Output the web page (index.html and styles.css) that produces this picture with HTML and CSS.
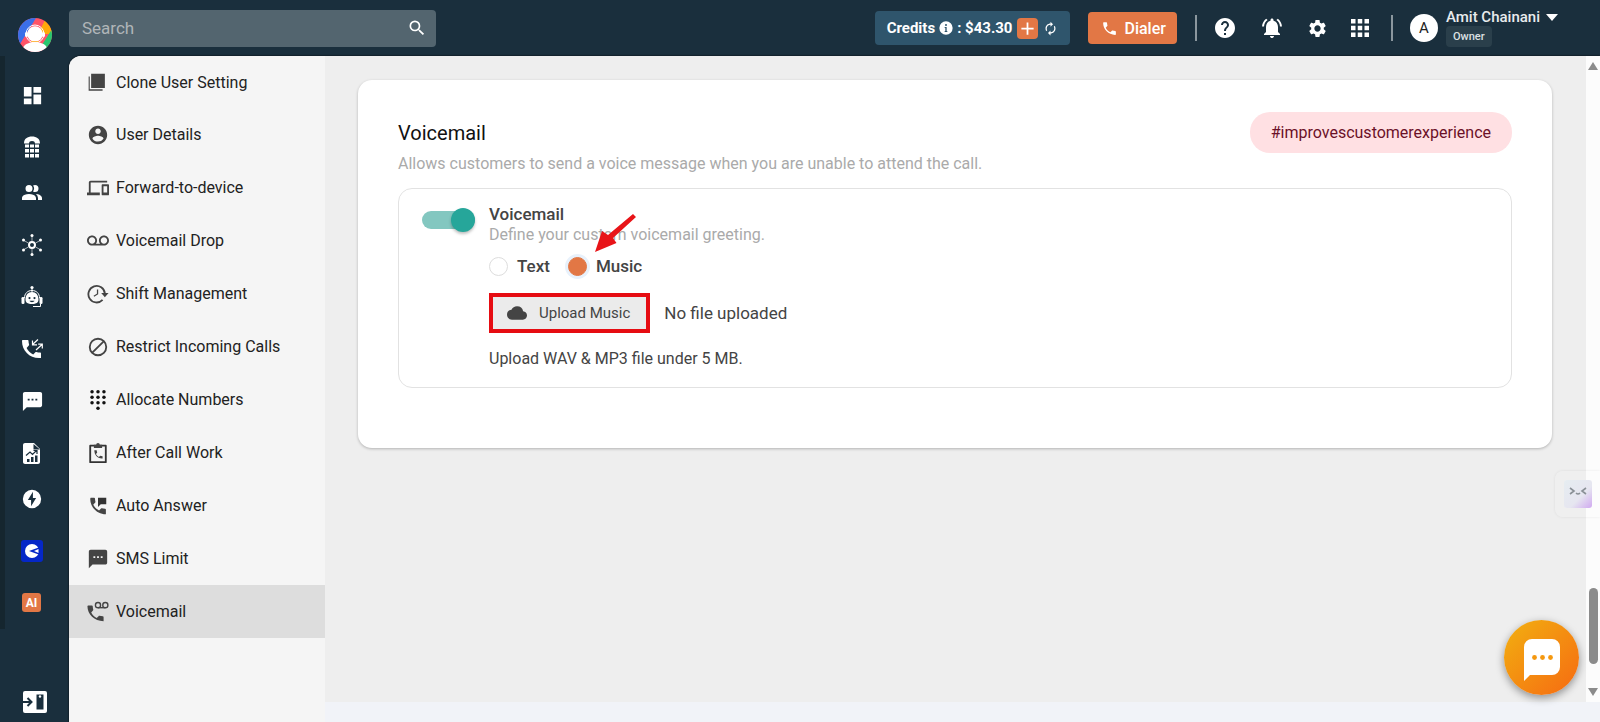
FILE: index.html
```html
<!DOCTYPE html>
<html lang="en">
<head>
    <meta charset="UTF-8">
    <meta name="viewport" content="width=device-width, initial-scale=1.0">
    <title>Voicemail Settings</title>
    <link rel="stylesheet" href="styles.css">
</head>
<body>
    <header class="topbar">
        <a class="logo" href="#" aria-label="Home">
            <svg viewBox="0 0 34 34" width="34" height="34">
                <defs><clipPath id="logoClip"><circle cx="17" cy="17" r="17"/></clipPath></defs>
                <g clip-path="url(#logoClip)">
                    <rect width="34" height="34" fill="#ff5468"/>
                    <path d="M0 0H18L2 26L0 26Z" fill="#3b6fe8"/>
                    <path d="M27 2L34 8V16H20Z" fill="#ffa90a"/>
                    <path d="M34 11L22 30L34 34Z" fill="#28c76f"/>
                    <circle cx="17" cy="16" r="9" fill="none" stroke="#fff" stroke-width="1"/>
                    <circle cx="17" cy="16" r="7.800" fill="#fff"/>
                    <rect x="7" y="14" width="3" height="5" rx="1.500" fill="#fff"/>
                    <rect x="24" y="14" width="3" height="5" rx="1.500" fill="#fff"/>
                    <ellipse cx="17" cy="31" rx="12" ry="7" fill="#fff"/>
                    <path d="M13 23.500H21" stroke="#ffb84d" stroke-width="1"/>
                </g>
            </svg>
        </a>
        <form class="search">
            <input type="text" placeholder="Search" aria-label="Search">
            <button type="button" aria-label="Search"><svg viewBox="0 0 24 24" width="20" height="20"><path d="M15.500 14h-.79l-.28-.27A6.470 6.470 0 0 0 16 9.500 6.500 6.500 0 1 0 9.500 16c1.610 0 3.090-.59 4.230-1.570l.27.28v.79l5 4.990L20.490 19zm-6 0C7.010 14 5 11.990 5 9.500S7.010 5 9.500 5 14 7.010 14 9.500 11.990 14 9.500 14"/></svg></button>
        </form>

        <div class="credits">
            <span>Credits</span>
            <svg viewBox="0 0 24 24" width="16" height="16"><path d="M12 2a10 10 0 1 0 0 20 10 10 0 0 0 0-20m2 16h-4v-1.500h1V12h-1v-1.500h3v6h1zM12 9a1.500 1.500 0 1 1 0-3 1.500 1.500 0 0 1 0 3"/></svg>
            <span>: $43.30</span>
            <button class="add" type="button" aria-label="Add credits"><svg viewBox="0 0 24 24" width="21" height="21"><path d="M19 13h-6v6h-2v-6H5v-2h6V5h2v6h6z"/></svg></button>
            <button class="refresh" type="button" aria-label="Refresh"><svg viewBox="0 0 24 24" width="15" height="15"><path d="M12 6v3l4-4-4-4v3c-4.420 0-8 3.580-8 8 0 1.570.46 3.030 1.240 4.260L6.700 14.800A5.900 5.900 0 0 1 6 12c0-3.310 2.690-6 6-6m6.760 1.740L17.300 9.200c.44.84.7 1.790.7 2.800 0 3.310-2.690 6-6 6v-3l-4 4 4 4v-3c4.420 0 8-3.580 8-8 0-1.570-.46-3.030-1.240-4.260"/></svg></button>
        </div>
        <button class="dialer" type="button">
            <svg viewBox="0 0 24 24" width="17" height="17"><path d="M6.620 10.790c1.440 2.830 3.760 5.140 6.590 6.590l2.200-2.200c.27-.27.67-.36 1.020-.24 1.120.37 2.330.57 3.570.57.55 0 1 .45 1 1V20c0 .55-.45 1-1 1-9.390 0-17-7.610-17-17 0-.55.45-1 1-1h3.500c.55 0 1 .45 1 1 0 1.250.2 2.450.57 3.570.11.35.03.74-.25 1.020z"/></svg>
            Dialer
        </button>
        <span class="divider"></span>
        <div class="tools">
            <button type="button" aria-label="Help"><svg viewBox="0 0 24 24" width="24" height="24"><path d="M12 2C6.480 2 2 6.480 2 12s4.480 10 10 10 10-4.480 10-10S17.520 2 12 2m1 17h-2v-2h2zm2.070-7.750-.9.920C13.450 12.900 13 13.500 13 15h-2v-.5c0-1.100.45-2.100 1.170-2.830l1.240-1.260c.37-.36.59-.86.59-1.410 0-1.100-.9-2-2-2s-2 .9-2 2H8c0-2.210 1.790-4 4-4s4 1.790 4 4c0 .88-.36 1.680-.93 2.250"/></svg></button>
            <button type="button" aria-label="Notifications"><svg viewBox="0 0 24 24" width="24" height="24"><path d="M7.580 4.080 6.150 2.650C3.750 4.480 2.170 7.300 2.030 10.500h2a8.450 8.450 0 0 1 3.550-6.420m12.390 6.420h2c-.15-3.200-1.730-6.020-4.120-7.850l-1.420 1.430a8.500 8.500 0 0 1 3.540 6.420M18 11c0-3.070-1.640-5.640-4.500-6.320V4c0-.83-.67-1.500-1.500-1.500s-1.500.67-1.500 1.500v.68C7.630 5.360 6 7.920 6 11v5l-2 2v1h16v-1l-2-2zm-6 11c.14 0 .27-.01.4-.04.65-.14 1.180-.58 1.440-1.180.1-.24.15-.5.15-.78h-4c.01 1.100.9 2 2.010 2"/></svg></button>
            <button type="button" aria-label="Settings"><svg viewBox="0 0 24 24" width="21" height="21"><path d="M19.140 12.940c.04-.3.06-.61.06-.94 0-.32-.02-.64-.07-.94l2.030-1.580c.18-.14.23-.41.12-.61l-1.920-3.320c-.12-.22-.37-.29-.59-.22l-2.390.96c-.5-.38-1.030-.7-1.620-.94l-.36-2.540c-.04-.24-.24-.41-.48-.41h-3.840c-.24 0-.43.17-.47.41l-.36 2.540c-.59.24-1.130.57-1.620.94l-2.390-.96c-.22-.08-.47 0-.59.22L2.740 8.870c-.12.21-.08.47.12.61l2.030 1.580c-.05.3-.09.63-.09.94s.02.64.07.94l-2.030 1.580c-.18.14-.23.41-.12.61l1.920 3.320c.12.22.37.29.59.22l2.390-.96c.5.38 1.030.7 1.620.94l.36 2.540c.05.24.24.41.48.41h3.840c.24 0 .44-.17.47-.41l.36-2.540c.59-.24 1.130-.56 1.620-.94l2.390.96c.22.08.47 0 .59-.22l1.920-3.320c.12-.22.07-.47-.12-.61zM12 15.600c-1.980 0-3.600-1.620-3.600-3.600s1.620-3.600 3.600-3.600 3.600 1.620 3.600 3.600-1.620 3.600-3.600 3.600"/></svg></button>
            <button type="button" aria-label="Apps"><svg viewBox="4 4 16 16" width="18" height="18"><path d="M4 8h4V4H4zm6 12h4v-4h-4zm-6 0h4v-4H4zm0-6h4v-4H4zm6 0h4v-4h-4zm6-10v4h4V4zm-6 4h4V4h-4zm6 6h4v-4h-4zm0 6h4v-4h-4z"/></svg></button>
        </div>
        <span class="divider"></span>
        <button class="account" type="button">
            <span class="avatar">A</span>
            <span class="who">
                <span class="name">Amit Chainani <i class="caret"></i></span>
                <span class="role">Owner</span>
            </span>
        </button>
    </header>

    <div class="page">
        <nav class="rail" aria-label="Main">
            <ul>
                <li><a href="#" aria-label="Dashboard"><svg viewBox="0 0 24 24" width="23" height="23"><path d="M3 13h8V3H3zm0 8h8v-6H3zm10 0h8V11h-8zm0-18v6h8V3z"/></svg></a></li>
                <li class="tight"><a href="#" aria-label="Numbers"><svg viewBox="0 0 24 24" width="24" height="24"><path d="M4 8.500C4 3.500 7.500 1.500 12 1.500s8 2 8 7h-5C15 6.800 13.800 6 12 6s-3 .8-3 2.500zM5 9.500h4v3H5zm5 0h4v3h-4zm5 0h4v3h-4zM5 14h4v3.500H5zm5 0h4v3.500h-4zm5 0h4v3.500h-4zM5 19h4v3.500H5zm5 0h4v3.500h-4zm5 0h4v3.500h-4z"/></svg></a></li>
                <li><a href="#" aria-label="Users"><svg viewBox="0 0 24 24" width="24" height="24"><path d="M16 17v2H2v-2s0-4 7-4 7 4 7 4m-3.500-9.500A3.500 3.500 0 1 0 9 11a3.500 3.500 0 0 0 3.500-3.500m3.440 5.500A5.320 5.320 0 0 1 18 17v2h4v-2s0-3.630-6.060-4M15 4a3.390 3.390 0 0 0-1.930.59 5 5 0 0 1 0 5.820A3.390 3.390 0 0 0 15 11a3.500 3.500 0 0 0 0-7"/></svg></a></li>
                <li><a href="#" aria-label="Integrations"><svg viewBox="0 0 24 24" width="24" height="24"><g fill="none" stroke="#fff"><circle cx="12" cy="12" r="3" stroke-width="2"/><path d="M12 3v5M12 16v5M4 7.500l4 2.300M16 14.200l4 2.300M4 16.500l4-2.300M16 9.800l4-2.300" stroke-width=".6"/></g><circle cx="12" cy="2.500" r="1.500"/><circle cx="12" cy="21.500" r="1.500"/><circle cx="3.500" cy="7" r="1.500"/><circle cx="20.500" cy="7" r="1.500"/><circle cx="3.500" cy="17" r="1.500"/><circle cx="20.500" cy="17" r="1.500"/></svg></a></li>
                <li><a href="#" aria-label="Bots"><svg viewBox="0 0 24 24" width="24" height="24"><circle cx="12" cy="2.500" r="1.600"/><path d="M11.500 3h1v4h-1z"/><path d="M4.500 13C4.500 8.500 7.500 5.500 12 5.500s7.500 3 7.500 7.500" fill="none" stroke="#fff"/><path d="M12 7c-4 0-6.500 3-6.500 7.500 0 3 2 4.500 6.500 4.500s6.500-1.500 6.500-4.500C18.500 10 16 7 12 7M9.500 12a1.100 1.100 0 1 1 0 2.200 1.100 1.100 0 0 1 0-2.200m5 0a1.100 1.100 0 1 1 0 2.200 1.100 1.100 0 0 1 0-2.200M9.500 15.800h5c-.5 1-1.500 1.400-2.500 1.400s-2-.4-2.500-1.400" fill-rule="evenodd"/><rect x="1.500" y="12" width="3" height="7" rx="1.300"/><rect x="19.500" y="12" width="3" height="7" rx="1.300"/><path d="M20.500 19v2.500H13" fill="none" stroke="#fff"/></svg></a></li>
                <li><a href="#" aria-label="Calls"><svg viewBox="0 0 24 24" width="24" height="24"><path d="M3 3h4.500c.6 0 1 .4 1 1 0 1.300.2 2.500.6 3.600.1.300 0 .7-.3 1L6.600 11c1.400 2.800 3.700 5 6.600 6.400l2.200-2.200c.3-.3.600-.3 1-.2 1.100.4 2.300.6 3.600.6.600 0 1 .4 1 1V21C10 22 2 14 2 4c0-.6.4-1 1-1"/><path d="M18 2.500l-5.500 5M12.500 3.500v4.300H17M16 13l6-5.500M18.200 7.200h4.100v4.300" fill="none" stroke="#fff" stroke-width="1.200"/></svg></a></li>
                <li><a href="#" aria-label="Messages"><svg viewBox="0 0 24 24" width="23" height="23"><path d="M20 2H4c-1.100 0-2 .9-2 2v18l4-4h14c1.100 0 2-.9 2-2V4c0-1.100-.9-2-2-2M9 11H7V9h2zm4 0h-2V9h2zm4 0h-2V9h2z"/></svg></a></li>
                <li class="tight"><a href="#" aria-label="Reports"><svg viewBox="0 0 24 24" width="24" height="24"><path d="M14 2H5c-1.100 0-2 .9-2 2v17c0 1.100.9 2 2 2h13c1.100 0 2-.9 2-2V8z"/><path d="M13.500 3v5.500H20M7 21v-3h2.500v3zM11 21v-5h2.500v5zM15 21v-6.500h2.500V21z" fill="#1a2f3d"/><path d="M6 14.500l4-3.500 2.500 2.500 4-4M13.500 9.500H17V13" fill="none" stroke="#1a2f3d" stroke-width="1.200"/></svg></a></li>
                <li><a href="#" aria-label="Automation"><svg viewBox="0 0 24 24" width="22" height="22"><path d="M12 2a10 10 0 1 0 0 20 10 10 0 0 0 0-20m-1 18v-7H7.500L13 4v7h3.500z"/></svg></a></li>
                <li><a href="#" aria-label="Campaigns"><svg viewBox="0 0 22 22" width="22" height="22"><rect width="22" height="22" rx="3" fill="#0527c7"/><circle cx="11" cy="11" r="7"/><path d="M19 7L8 11l11 4z" fill="#0527c7"/><path d="M13 11l4.500-2v4z"/></svg></a></li>
                <li><a class="ai" href="#">AI</a></li>
            </ul>
            <a class="collapse" href="#" aria-label="Expand panel"><svg viewBox="0 0 24 22" width="24" height="22"><rect width="24" height="22" rx="2"/><path d="M13.500 3.500h7v15h-7z" fill="#1a2f3d"/><circle cx="17" cy="5.500" r="1.200"/><path d="M0 11h8M4.500 7l4 4-4 4" fill="none" stroke="#1a2f3d" stroke-width="2"/></svg></a>
        </nav>

        <div class="content">
            <nav class="settings-nav" aria-label="Settings">
                <a href="#"><svg viewBox="0 0 24 24" width="22" height="22"><path d="M3 6H1.800v15.500H17V20H3z"/><path d="M4.500 3h15v15.500h-15z"/></svg>Clone User Setting</a>
                <a href="#"><svg viewBox="0 0 24 24" width="22" height="22"><path d="M12 2C6.480 2 2 6.480 2 12s4.480 10 10 10 10-4.480 10-10S17.520 2 12 2m0 3c1.660 0 3 1.340 3 3s-1.340 3-3 3-3-1.340-3-3 1.340-3 3-3m0 14.200a7.200 7.200 0 0 1-6-3.220c.03-1.990 4-3.080 6-3.080 1.990 0 5.970 1.090 6 3.080a7.200 7.200 0 0 1-6 3.220"/></svg>User Details</a>
                <a href="#"><svg viewBox="0 0 24 24" width="22" height="22"><path d="M4 6h18V4H4c-1.100 0-2 .9-2 2v11H0v3h14v-3H4zm19 2h-6c-.55 0-1 .45-1 1v10c0 .55.45 1 1 1h6c.55 0 1-.45 1-1V9c0-.55-.45-1-1-1m-1 9h-4v-7h4z"/></svg>Forward-to-device</a>
                <a href="#"><svg viewBox="0 0 24 24" width="22" height="22"><path d="M18.500 6C15.460 6 13 8.460 13 11.500c0 1.330.47 2.550 1.260 3.500H9.740A5.450 5.450 0 0 0 11 11.500C11 8.460 8.540 6 5.500 6S0 8.460 0 11.500 2.460 17 5.500 17h13c3.040 0 5.500-2.460 5.500-5.500S21.540 6 18.500 6m-13 9C3.570 15 2 13.430 2 11.500S3.570 8 5.500 8 9 9.570 9 11.500 7.430 15 5.500 15m13 0c-1.930 0-3.500-1.570-3.500-3.500S16.570 8 18.500 8 22 9.570 22 11.500 20.430 15 18.500 15"/></svg>Voicemail Drop</a>
                <a href="#"><svg viewBox="0 0 24 24" width="22" height="22"><path d="M17 18.500A9 9 0 1 1 19.500 11.500" fill="none" stroke="#444" stroke-width="2"/><path d="M15.500 11h8l-4 4.500z"/><path d="M11.500 7v5L7.500 14.500" fill="none" stroke="#444" stroke-width="1.400"/></svg>Shift Management</a>
                <a href="#"><svg viewBox="0 0 24 24" width="22" height="22"><g fill="none" stroke="#444" stroke-width="2"><circle cx="12" cy="12" r="9"/><path d="M5.500 18.500l13-13"/></g></svg>Restrict Incoming Calls</a>
                <a href="#"><svg viewBox="0 0 24 24" width="22" height="22"><g fill="#111"><circle cx="5.500" cy="3" r="1.900"/><circle cx="12" cy="3" r="1.900"/><circle cx="18.500" cy="3" r="1.900"/><circle cx="5.500" cy="9" r="1.900"/><circle cx="12" cy="9" r="1.900"/><circle cx="18.500" cy="9" r="1.900"/><circle cx="5.500" cy="15" r="1.900"/><circle cx="12" cy="15" r="1.900"/><circle cx="18.500" cy="15" r="1.900"/><circle cx="12" cy="21" r="1.900"/></g></svg>Allocate Numbers</a>
                <a href="#"><svg viewBox="0 0 24 24" width="22" height="22"><path d="M3.500 4h17v18h-17z" fill="none" stroke="#333" stroke-width="2" stroke-linejoin="round"/><path d="M7.500 3H10a2 2 0 0 1 4 0h2.500v3.500h-9z"/><path d="M8 9h2.500l.6 2.800-1.400 1.400c.8 1.400 1.900 2.400 3.300 3.100l1.400-1.400 2.600.7V18C11.500 18.500 8 14 8 9"/></svg>After Call Work</a>
                <a href="#"><svg viewBox="0 0 24 24" width="22" height="22"><path d="M4 3h3.800c.5 0 .9.400.9.900 0 1.200.2 2.300.5 3.400.1.300 0 .7-.2 1L6.800 10.600c1.400 2.700 3.600 4.900 6.300 6.200l2.200-2.200c.3-.2.600-.3 1-.2 1 .3 2.200.5 3.400.5.500 0 .9.400.9.900V21C11 21 3.500 13.500 3.500 4z"/><path d="M12 3h9v7h-6l-3 3z" fill="#333"/></svg>Auto Answer</a>
                <a href="#"><svg viewBox="0 0 24 24" width="22" height="22"><path d="M20 2H4c-1.100 0-2 .9-2 2v18l4-4h14c1.100 0 2-.9 2-2V4c0-1.100-.9-2-2-2M9 11H7V9h2zm4 0h-2V9h2zm4 0h-2V9h2z"/></svg>SMS Limit</a>
                <a class="active" href="#" aria-current="page"><svg viewBox="0 0 24 24" width="22" height="22"><path d="M1.500 5h3.800c.6 0 1 .4 1 1 0 1.200.2 2.300.5 3.300.1.400 0 .8-.3 1L4.600 12.500c1.300 2.600 3.400 4.700 6 6l2-2c.3-.3.700-.4 1-.3 1.100.3 2.300.5 3.500.5.500 0 1 .5 1 1V22C8 22 .5 14.500.5 6c0-.6.5-1 1-1"/><g fill="none" stroke="#444" stroke-width="1.500"><circle cx="12" cy="4.500" r="2.800"/><circle cx="20" cy="4.500" r="2.800"/><path d="M12 7.300h8"/></g></svg>Voicemail</a>
            </nav>

            <main>
                <div class="scroll-area">
                    <section class="card">
                        <div class="card-head">
                            <h1>Voicemail</h1>
                            <span class="tag">#improvescustomerexperience</span>
                        </div>
                        <p class="hint">Allows customers to send a voice message when you are unable to attend the call.</p>

                        <div class="setting">
                            <input class="toggle" type="checkbox" id="voicemail" checked>
                            <div class="setting-body">
                                <label class="setting-title" for="voicemail">Voicemail</label>
                                <p class="hint">Define your custom voicemail greeting.</p>
                                <div class="radios">
                                    <label><input type="radio" name="greeting" value="text">Text</label>
                                    <label><input type="radio" name="greeting" value="music" checked>Music</label>
                                    <svg class="arrow" viewBox="0 0 42 40" width="42" height="40"><path d="M38 1L41 4L18 25L21.500 30L0 39L7 18L13 22Z" fill="#e81418"/></svg>
                                </div>
                                <div class="upload">
                                    <button type="button">
                                        <svg viewBox="0 4 24 16" width="20" height="14"><path d="M19.350 10.040A7.490 7.490 0 0 0 12 4C9.110 4 6.600 5.640 5.350 8.040A5.994 5.994 0 0 0 0 14c0 3.310 2.690 6 6 6h13c2.760 0 5-2.240 5-5 0-2.640-2.050-4.780-4.650-4.960"/></svg>
                                        Upload Music
                                    </button>
                                    <span>No file uploaded</span>
                                </div>
                                <p class="note">Upload WAV &amp; MP3 file under 5 MB.</p>
                            </div>
                        </div>
                    </section>
                </div>
                <div class="scrollbar" aria-hidden="true">
                    <i class="up"></i>
                    <i class="thumb"></i>
                    <i class="down"></i>
                </div>
            </main>
        </div>
    </div>

    <button class="assistant" type="button" aria-label="Assistant">
        <svg viewBox="0 0 28 28" width="28" height="28">
            <defs><linearGradient id="assistFill" x1="0" y1="0" x2="1" y2="1"><stop offset="0" stop-color="#e6edf1"/><stop offset=".6" stop-color="#e6e6f0"/><stop offset="1" stop-color="#d0a8f0"/></linearGradient></defs>
            <rect width="28" height="28" rx="3" fill="url(#assistFill)"/>
            <path d="M6 8l4 3-4 3M22 8l-4 3 4 3M12 13q2 2 4 0" fill="none" stroke="#8a9096" stroke-width="1.600"/>
        </svg>
    </button>
    <button class="chat" type="button" aria-label="Open chat">
        <svg viewBox="0 0 36 42" width="36" height="42"><path d="M8 0H28a8 8 0 0 1 8 8V28a8 8 0 0 1-8 8H6L0 42V8a8 8 0 0 1 8-8" fill="#fff"/><g fill="#f5980f"><circle cx="10.500" cy="18.500" r="2.400"/><circle cx="18.500" cy="18.500" r="2.400"/><circle cx="26.500" cy="18.500" r="2.400"/></g></svg>
    </button>
</body>
</html>
```

FILE: styles.css
```css
* {
    box-sizing: border-box;
}

body {
    margin: 0;
    height: 100vh;
    display: flex;
    flex-direction: column;
    overflow: hidden;
    background-color: #1a2f3d;
    font-family: Roboto, "Liberation Sans", sans-serif;
    font-size: 17px;
    color: #444;
}

h1, p, ul {
    margin: 0;
    padding: 0;
}

a {
    color: inherit;
    text-decoration: none;
}

button {
    padding: 0;
    border: none;
    background: none;
    color: inherit;
    font: inherit;
    cursor: pointer;
}

svg {
    display: block;
    flex: none;
    fill: currentColor;
}

/* top bar */
.topbar {
    display: flex;
    align-items: center;
    height: 56px;
    padding-right: 42px;
    color: #fff;
}

.logo {
    width: 69px;
    padding: 13px 0 0 18px;
}

.search {
    display: flex;
    align-items: center;
    width: 367px;
    height: 37px;
    margin-right: auto;
    padding: 0 9px 0 13px;
    border-radius: 4px;
    background-color: #53656f;
}

.search input {
    flex: 1;
    min-width: 0;
    padding: 0;
    border: none;
    outline: none;
    background: none;
    color: #fff;
    font: inherit;
}

.search input::placeholder {
    color: #b0b5b8;
}

.credits {
    display: flex;
    align-items: center;
    gap: 3px;
    height: 34px;
    margin-right: 18px;
    padding: 0 12px;
    border-radius: 4px;
    background-color: #2f556c;
    font-size: 15px;
    font-weight: 700;
}

.credits .add {
    margin-left: 2px;
    border-radius: 4px;
    background-color: #e27745;
}

.credits .refresh {
    margin-left: 2px;
}

.dialer {
    display: flex;
    align-items: center;
    gap: 6px;
    height: 32px;
    margin-right: 18px;
    padding: 0 11px 0 13px;
    border-radius: 4px;
    background-color: #e27745;
    font-size: 16px;
    font-weight: 500;
}

.divider {
    width: 2px;
    height: 26px;
    background-color: #8b979e;
}

.tools {
    display: flex;
    align-items: center;
    gap: 23px;
    padding: 0 22px 0 16px;
}

.account {
    display: flex;
    align-items: center;
    gap: 8px;
    margin-left: 17px;
}

.avatar {
    width: 28px;
    height: 28px;
    border-radius: 50%;
    background-color: #fff;
    color: #222;
    font-size: 15px;
    line-height: 28px;
}

.who {
    display: flex;
    flex-direction: column;
    align-items: flex-start;
}

.name {
    display: flex;
    align-items: center;
    gap: 6px;
    font-size: 15px;
    font-weight: 500;
    line-height: 17px;
    color: #e8ebed;
}

.caret {
    border: 6px solid transparent;
    border-top: 7px solid #fff;
    border-bottom: none;
}

.role {
    padding: 0 7px;
    border-radius: 4px;
    background-color: #2a3f4b;
    color: #dde1e3;
    font-size: 11px;
    font-weight: 500;
    line-height: 21px;
}

/* icon rail */
.page {
    display: flex;
    flex: 1;
    min-height: 0;
}

.rail {
    display: flex;
    flex-direction: column;
    justify-content: space-between;
    align-items: flex-start;
    width: 69px;
    padding-bottom: 9px;
    color: #fff;
}

.rail ul {
    width: 100%;
    padding: 27px 0 12px 15px;
    border-left: 5px solid #15262f;
    list-style: none;
}

.rail li {
    height: 52px;
}

.rail li.tight {
    height: 46px;
}

.rail li:last-child {
    height: 24px;
}

.rail li a {
    display: flex;
    align-items: center;
    justify-content: center;
    width: 24px;
    height: 24px;
}

.rail li a.ai {
    width: 19px;
    height: 19px;
    margin: 2px;
    border-radius: 3px;
    background-color: #e27745;
    font-size: 12px;
    font-weight: 700;
}

.collapse {
    margin-left: 23px;
}

/* settings menu */
.content {
    display: flex;
    flex: 1;
    min-width: 0;
    overflow: hidden;
    border-radius: 12px 0 0 0;
    background-color: #f1f3f8;
    box-shadow: 0 0 2px #000;
}

.settings-nav {
    width: 256px;
    background-color: #f5f5f5;
}

.settings-nav a {
    display: flex;
    align-items: center;
    gap: 7px;
    height: 53px;
    padding-left: 18px;
    color: #222;
    font-size: 16px;
}

.settings-nav a:first-child {
    height: 52px;
}

.settings-nav svg {
    color: #444;
}

.settings-nav .active {
    background-color: #ddd;
}

/* main area */
main {
    display: flex;
    flex: 1;
    min-width: 0;
    margin-bottom: 20px;
    background-color: #eee;
}

.scroll-area {
    flex: 1;
    padding: 24px 34px 0 33px;
}

.card {
    padding: 32px 40px 60px;
    border-radius: 14px;
    background-color: #fff;
    box-shadow: 0 1px 3px rgba(0, 0, 0, 0.25);
}

.card-head {
    display: flex;
    align-items: center;
    justify-content: space-between;
}

h1 {
    font-size: 20px;
    font-weight: 400;
    color: #111;
}

.tag {
    padding: 0 21px;
    border-radius: 20px;
    background-color: #ffe0e3;
    color: #6b1028;
    font-size: 16px;
    line-height: 41px;
}

.hint {
    font-size: 16px;
    line-height: 22px;
    color: #aaa;
}

.setting {
    display: flex;
    gap: 14px;
    margin-top: 13px;
    padding: 15px 23px 17px;
    border: 1px solid #e2e2e2;
    border-radius: 14px;
}

.toggle {
    appearance: none;
    display: flex;
    align-items: center;
    justify-content: flex-end;
    width: 53px;
    height: 18px;
    margin: 7px 0 0;
    border-radius: 9px;
    background-color: #83c7c0;
    flex: none;
}

.toggle::before {
    content: "";
    width: 24px;
    height: 24px;
    flex: none;
    border-radius: 50%;
    background-color: #26a69a;
    box-shadow: 0 2px 3px rgba(0, 0, 0, 0.25);
}

.toggle:not(:checked) {
    justify-content: flex-start;
}

.setting-title {
    display: block;
    font-size: 17px;
    font-weight: 500;
    line-height: 20px;
}

.radios {
    position: relative;
    display: flex;
    gap: 18px;
    margin-top: 9px;
    font-size: 17px;
    font-weight: 500;
    line-height: 22px;
}

.radios label {
    display: flex;
    align-items: center;
    gap: 9px;
}

.radios input {
    appearance: none;
    width: 19px;
    height: 19px;
    margin: 0;
    border: 1px solid #ddd;
    border-radius: 50%;
    background-color: #fff;
}

.radios input:checked {
    border-color: #e27745;
    background-color: #e27745;
    box-shadow: 0 0 0 3px #e8f1fb;
}

/* pointer to the selected option */
.arrow {
    position: absolute;
    left: 106px;
    top: -42px;
}

.upload {
    display: flex;
    align-items: center;
    gap: 14px;
    margin-top: 16px;
    font-size: 17px;
}

.upload button {
    display: flex;
    align-items: center;
    gap: 12px;
    height: 40px;
    padding: 0 16px 0 14px;
    border: 4px solid #e60c12;
    background-color: #ebebeb;
    font-size: 15px;
}

.note {
    margin-top: 15px;
    font-size: 16px;
    line-height: 22px;
}

/* page scrollbar */
.scrollbar {
    display: flex;
    flex-direction: column;
    align-items: center;
    width: 14px;
    padding: 6px 0;
    background-color: #fcfcfc;
}

.scrollbar .up,
.scrollbar .down {
    border: 5px solid transparent;
}

.scrollbar .up {
    border-top: none;
    border-bottom: 8px solid #8b8b8b;
}

.scrollbar .down {
    border-bottom: none;
    border-top: 8px solid #8b8b8b;
}

.scrollbar .thumb {
    width: 9px;
    height: 76px;
    margin: auto 0 24px;
    border-radius: 5px;
    background-color: #8b8b8b;
}

/* floating buttons */
.assistant {
    position: fixed;
    right: 0;
    bottom: 205px;
    padding: 9px 8px 9px 9px;
    border-radius: 8px 0 0 8px;
    background-color: rgba(255, 255, 255, 0.1);
    box-shadow: 0 0 3px rgba(0, 0, 0, 0.08);
}

.chat {
    position: fixed;
    right: 21px;
    bottom: 27px;
    display: flex;
    align-items: center;
    justify-content: center;
    width: 75px;
    height: 75px;
    padding-top: 5px;
    border-radius: 50%;
    background: linear-gradient(135deg, #f2b010, #f66a12);
    box-shadow: 0 3px 8px rgba(0, 0, 0, 0.4);
}
```
